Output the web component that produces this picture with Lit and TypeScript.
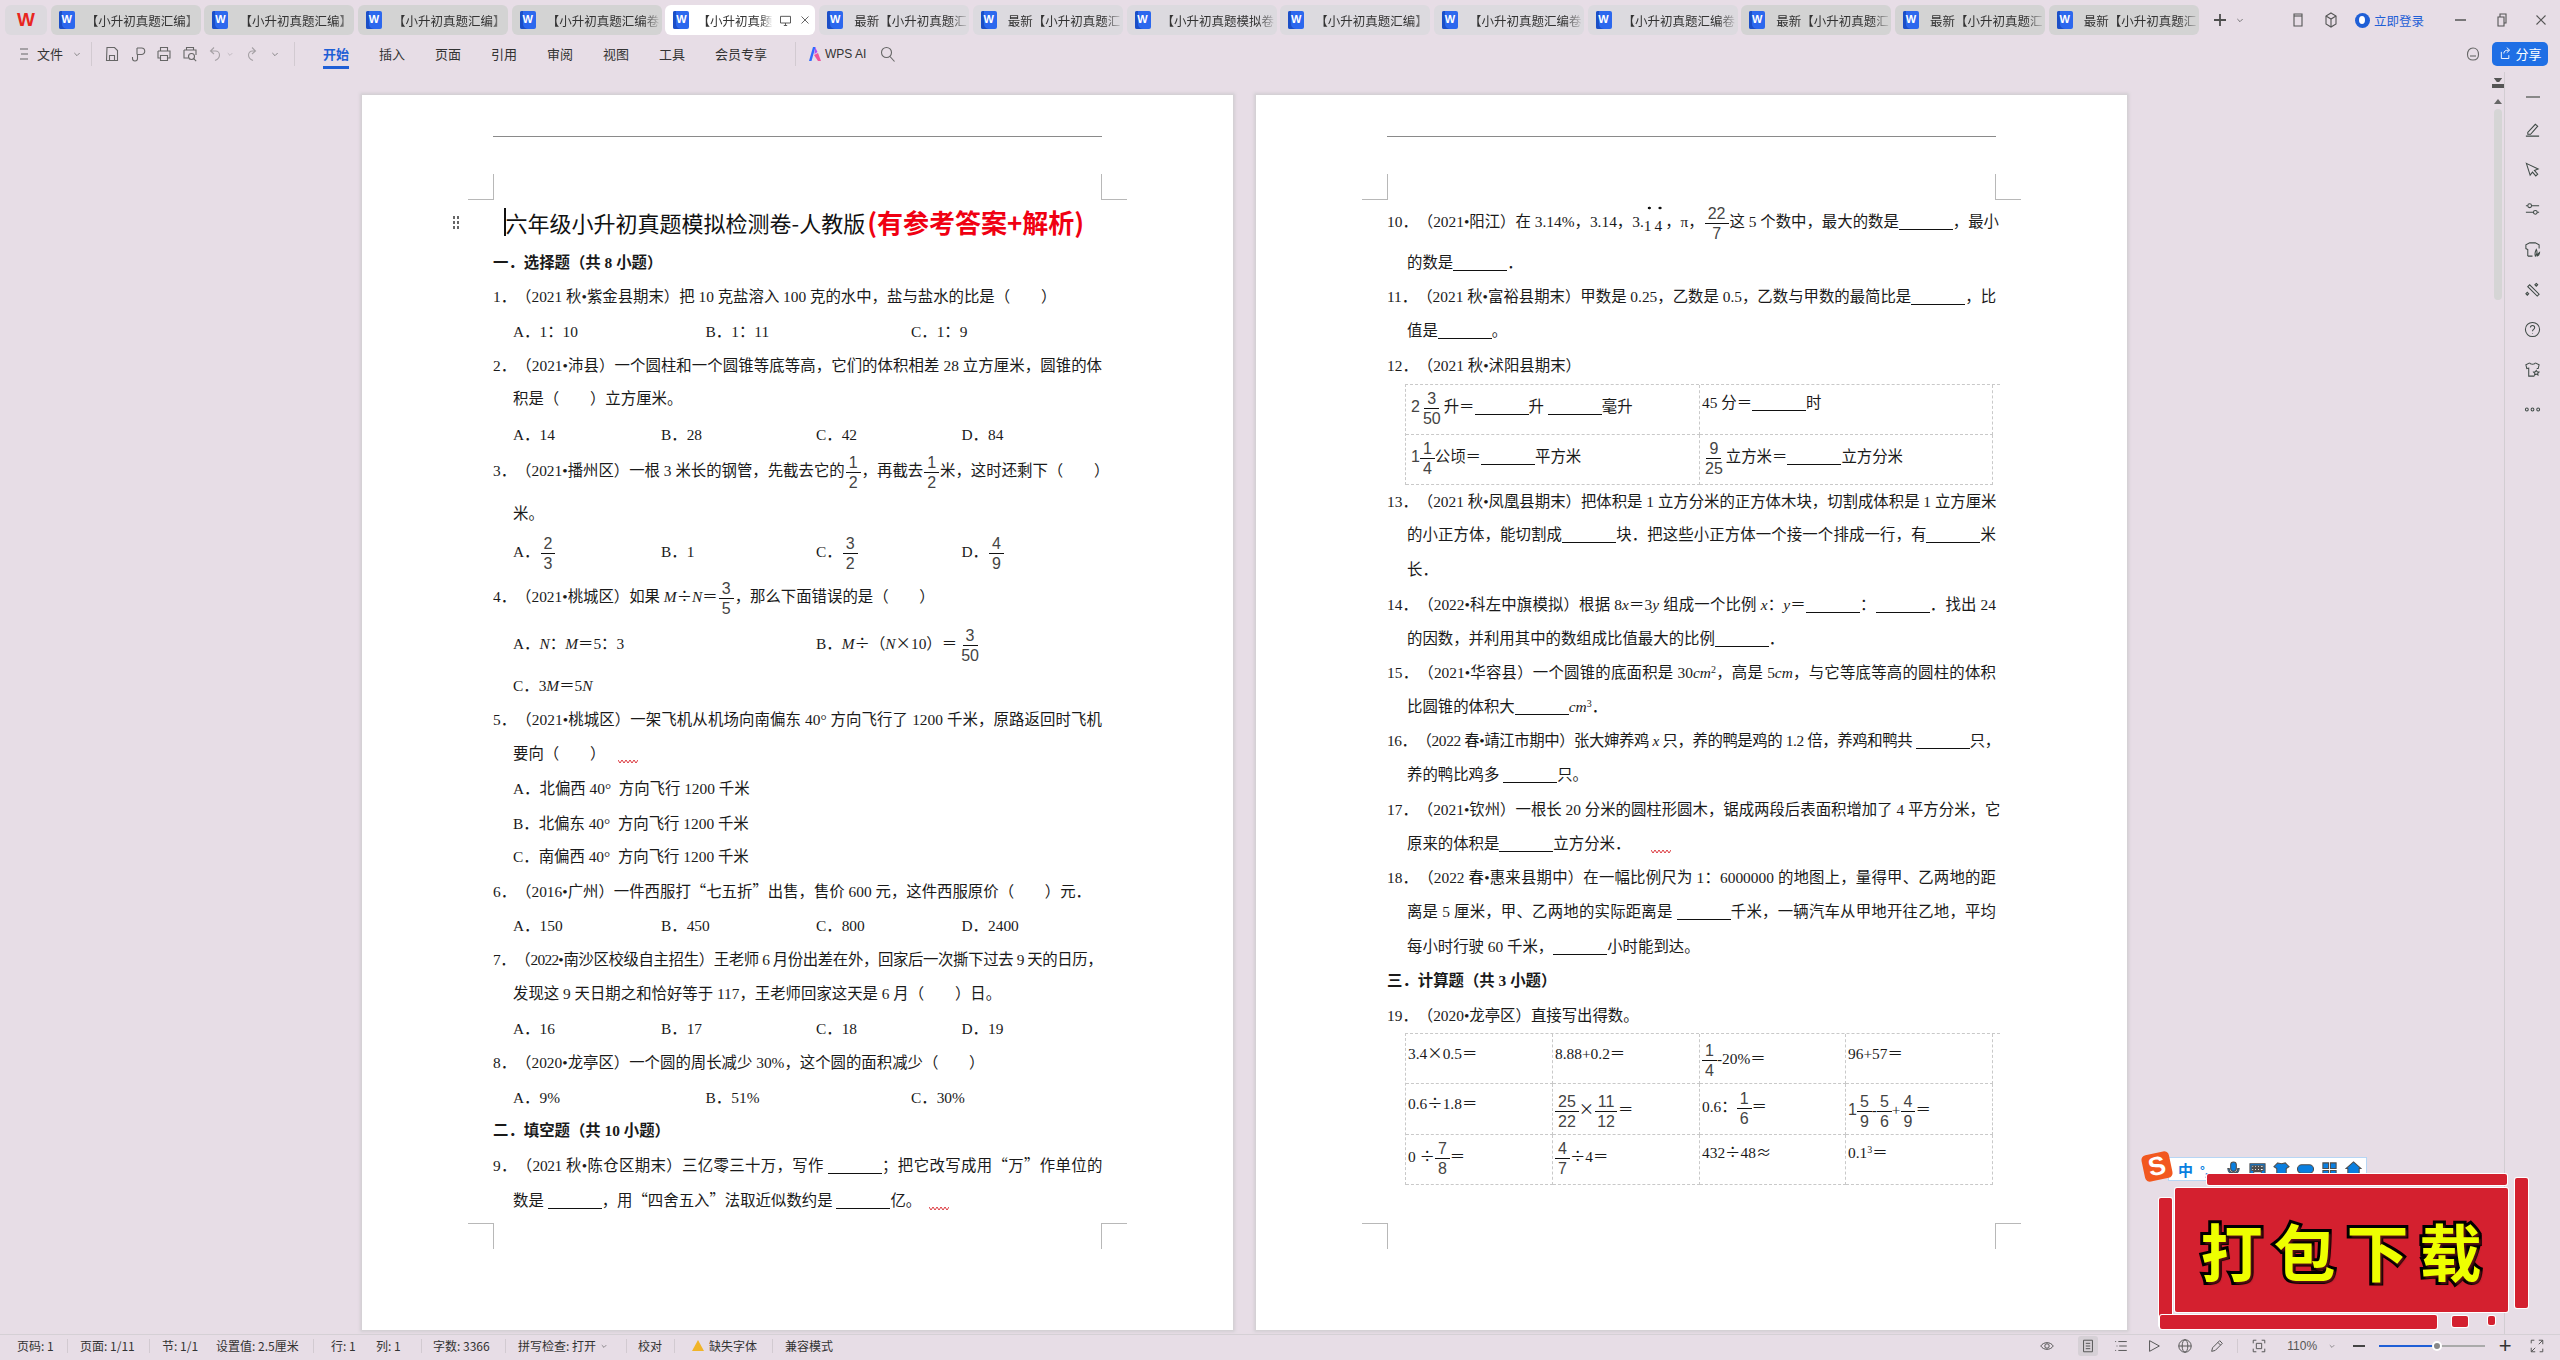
import { LitElement, html, css, svg } from 'lit';
import { customElement } from 'lit/decorators.js';

// --- small inline helpers for the document body ---
const f = (n: string, d: string, cls = '') => html`<span class="f ${cls}"><span>${n}</span><span>${d}</span></span>`;
const mixed = (w: string, n: string, d: string) => html`<span class="mixed">${w}</span>${f(n, d, 'tight')}`;
const b = () => html`<span class="blank"></span>`;
const wave = (gap: number) => html`<svg class="wave" style="margin-left:${gap}px" width="20" height="5" viewBox="0 0 20 5"><path d="M0 1l2 3 2-3 2 3 2-3 2 3 2-3 2 3 2-3 2 3 2-3" fill="none" stroke="#d8262c" stroke-width=".9"/></svg>`;

// glyphs that the paper shows at full CJK width
const cj = (t: string) => html`<span class="cj">${t}</span>`;
const LQ = cj('“');
const RQ = cj('”');
const DIV = cj('÷');
const MUL = cj('×');

type Item = { top: number; h: number; body: unknown; cls?: string };
const l = (c: number, body: unknown, cls = ''): Item => ({ top: c - 10, h: 20, body, cls });

// each line sits at its own place in the document, given by its centre
const opts = (c: number, cols: string, items: unknown[]): Item =>
  l(c, items.map((o) => html`<span>${o}</span>`), `opts ${cols}`);

const cellTable = (cols: string, rows: { h: number; cells: [number, unknown][] }[]) => html`
  <div class="tbl ${cols}">
    ${rows.map((r) => r.cells.map(([pad, c]) => html`
      <div class="cell" style="height:${r.h}px;padding-top:${pad}px">${c}</div>`))}
  </div>`;

const page1: Item[] = [
  l(221.5, html`<span class="cursor"></span>六年级小升初真题模拟检测卷-人教版<span class="red">(有参考答案+解析)</span>`, 'title'),
  l(262.6, '一．选择题（共 8 小题）', 'head'),
  l(296.7, '1．（2021 秋•紫金县期末）把 10 克盐溶入 100 克的水中，盐与盐水的比是（　　）'),
  opts(332, 'o3', ['A．1：10', 'B．1：11', 'C．1：9']),
  l(365.6, '2．（2021•沛县）一个圆柱和一个圆锥等底等高，它们的体积相差 28 立方厘米，圆锥的体', 'j'),
  l(399, '积是（　　）立方厘米。', 'in'),
  opts(435, 'o4', ['A．14', 'B．28', 'C．42', 'D．84']),
  l(471, html`3．（2021•播州区）一根 3 米长的钢管，先截去它的${f('1', '2')}，再截去${f('1', '2')}米，这时还剩下（　　）`, 'j'),
  l(514, '米。', 'in'),
  opts(552, 'o4', [html`A．${f('2', '3')}`, 'B．1', html`C．${f('3', '2')}`, html`D．${f('4', '9')}`]),
  l(597.5, html`4．（2021•桃城区）如果 <i>M</i>${DIV}<i>N</i>＝${f('3', '5')}，那么下面错误的是（　　）`),
  opts(644, 'o2', [html`A．<i>N</i>：<i>M</i>＝5：3`, html`B．<i>M</i>${DIV}（<i>N</i>${MUL}10）＝${f('3', '50')}`]),
  l(686, html`C．3<i>M</i>＝5<i>N</i>`, 'in'),
  l(720, '5．（2021•桃城区）一架飞机从机场向南偏东 40° 方向飞行了 1200 千米，原路返回时飞机', 'j'),
  l(754, html`要向（　　）${wave(13)}`, 'in'),
  l(789, 'A．北偏西 40°\u00a0 方向飞行 1200 千米', 'in'),
  l(824, 'B．北偏东 40°\u00a0 方向飞行 1200 千米', 'in'),
  l(857.5, 'C．南偏西 40°\u00a0 方向飞行 1200 千米', 'in'),
  l(892, html`6．（2016•广州）一件西服打${LQ}七五折${RQ}出售，售价 600 元，这件西服原价（　　）元．`),
  opts(926, 'o4', ['A．150', 'B．450', 'C．800', 'D．2400']),
  l(960.5, '7．（2022•南沙区校级自主招生）王老师 6 月份出差在外，回家后一次撕下过去 9 天的日历，', 'j squeeze'),
  l(994, '发现这 9 天日期之和恰好等于 117，王老师回家这天是 6 月（　　）日。', 'in'),
  opts(1029, 'o4', ['A．16', 'B．17', 'C．18', 'D．19']),
  l(1063.5, '8．（2020•龙亭区）一个圆的周长减少 30%，这个圆的面积减少（　　）'),
  opts(1098, 'o3', ['A．9%', 'B．51%', 'C．30%']),
  l(1131, '二．填空题（共 10 小题）', 'head'),
  l(1166, html`9．（2021 秋•陈仓区期末）三亿零三十万，写作 ${b()}；把它改写成用${LQ}万${RQ}作单位的`, 'j squeeze2'),
  l(1200.6, html`数是 ${b()}，用${LQ}四舍五入${RQ}法取近似数约是 ${b()}亿。${wave(8)}`, 'in'),
];

const table12 = cellTable('t2', [
  { h: 50, cells: [
    [12, html`<span class="ml3">${mixed('2', '3', '50')}升＝${b()}升 ${b()}毫升</span>`],
    [8, html`45 分＝${b()}时`],
  ] },
  { h: 50, cells: [
    [12, html`<span class="ml3">${mixed('1', '1', '4')}公顷＝${b()}平方米</span>`],
    [12, html`${f('9', '25', 'tight')}立方米＝${b()}立方分米`],
  ] },
]);

const table19 = cellTable('t4', [
  { h: 50, cells: [
    [10, html`3.4${MUL}0.5＝`],
    [10, '8.88+0.2＝'],
    [15, html`${f('1', '4', 'tight')}-20%＝`],
    [10, '96+57＝'],
  ] },
  { h: 51, cells: [
    [10, html`0.6${DIV}1.8＝`],
    [16, html`${f('25', '22', 'tight')}${MUL}${f('11', '12', 'tight')}＝`],
    [13, html`0.6：${f('1', '6', 'tight')}＝`],
    [16, html`${mixed('1', '5', '9')}-${f('5', '6', 'tight')}+${f('4', '9', 'tight')}＝`],
  ] },
  { h: 50, cells: [
    [12, html`0 ${DIV}${f('7', '8', 'tight')}＝`],
    [12, html`${f('4', '7', 'tight')}${DIV}4＝`],
    [8, html`432${DIV}48${cj('≈')}`],
    [8, html`0.1<sup>3</sup>＝`],
  ] },
]);

const page2: Item[] = [
  l(221.7, html`10．（2021•阳江）在 3.14%，3.14，3.<span class="dots">14</span>，π，${f('22', '7')}这 5 个数中，最大的数是${b()}，最小`, 'j'),
  l(262.6, html`的数是${b()}．`, 'in'),
  l(296.7, html`11．（2021 秋•富裕县期末）甲数是 0.25，乙数是 0.5，乙数与甲数的最简比是${b()}，比`, 'j'),
  l(331.5, html`值是${b()}。`, 'in'),
  l(365.6, '12．（2021 秋•沭阳县期末）'),
  { top: 383.6, h: 100, body: table12, cls: 'block' },
  l(501, '13．（2021 秋•凤凰县期末）把体积是 1 立方分米的正方体木块，切割成体积是 1 立方厘米', 'j'),
  l(534.4, html`的小正方体，能切割成${b()}块．把这些小正方体一个接一个排成一行，有${b()}米`, 'in j'),
  l(568.8, '长．', 'in'),
  l(604, html`14．（2022•科左中旗模拟）根据 8<i>x</i>＝3<i>y</i> 组成一个比例 <i>x</i>：<i>y</i>＝${b()}：${b()}．找出 24`, 'j'),
  l(637.7, html`的因数，并利用其中的数组成比值最大的比例${b()}．`, 'in'),
  l(672.5, html`15．（2021•华容县）一个圆锥的底面积是 30<i>cm</i><sup>2</sup>，高是 5<i>cm</i>，与它等底等高的圆柱的体积`, 'j'),
  l(706, html`比圆锥的体积大${b()}<i>cm</i><sup>3</sup>．`, 'in'),
  l(740.4, html`16．（2022 春•靖江市期中）张大婶养鸡 <i>x</i> 只，养的鸭是鸡的 1.2 倍，养鸡和鸭共 ${b()}只，`, 'j squeeze2'),
  l(774.6, html`养的鸭比鸡多 ${b()}只。`, 'in'),
  l(808.8, '17．（2021•钦州）一根长 20 分米的圆柱形圆木，锯成两段后表面积增加了 4 平方分米，它', 'j'),
  l(843, html`原来的体积是${b()}立方分米．${wave(21)}`, 'in'),
  l(877, '18．（2022 春•惠来县期中）在一幅比例尺为 1：6000000 的地图上，量得甲、乙两地的距', 'j'),
  l(911.3, html`离是 5 厘米，甲、乙两地的实际距离是 ${b()}千米，一辆汽车从甲地开往乙地，平均`, 'in j'),
  l(946.4, html`每小时行驶 60 千米，${b()}小时能到达。`, 'in'),
  l(980.6, '三．计算题（共 3 小题）', 'head'),
  l(1014.7, '19．（2020•龙亭区）直接写出得数。'),
  { top: 1032.3, h: 151, body: table19, cls: 'block' },
];

// --- chrome icons ---
const s = (body: unknown, w = 18, h = 18, vb = '0 0 18 18') =>
  html`<svg class="ic" width=${w} height=${h} viewBox=${vb}>${body}</svg>`;

const icons = {
  menu: svg`<path d="M4 4h8M5 9h7M4 14h8"/>`,
  save: svg`<path d="M4 2.500h7.500l3 3v10h-11z"/><path d="M6.500 15.500v-5h5v5"/>`,
  share: svg`<path d="M8 3h4.500a3 3 0 0 1 0 6.500H8.500v4a2.500 2.500 0 0 1-5 0V12M8 3v6.500"/>`,
  print: svg`<path d="M5.500 6V2.500h7V6M3 6h12v7h-2.500M5.500 13H3V6"/><path d="M5.500 10.500h7v5h-7z"/>`,
  preview: svg`<path d="M5.500 5V2.500h7V5M3 5h12v5M3 5v8h4"/><circle cx="10.500" cy="11.500" r="3"/><path d="M12.700 13.700l2.500 2.500"/>`,
  undo: svg`<path d="M7 2.500L3.500 6 7 9M3.500 6h5a4 4 0 0 1 4 4c0 2.500-2 4.500-4.500 5.500"/>`,
  redo: svg`<path d="M9 2.500L12.500 6 9 9M12.500 6h-3a4 4 0 0 0-4 4c0 2.500 2 4.500 4.500 5.500"/>`,
  search: svg`<circle cx="7.500" cy="7.500" r="5"/><path d="M11 11.500l4.500 5"/>`,
  chev: svg`<path d="M5 7.500l4 4 4-4"/>`,
  note: svg`<path d="M5 3h8v12H5z"/><path d="M5 5h8"/>`,
  hex: svg`<path d="M9 2l5 3v8l-5 3-5-3V5z"/><path d="M4 5l5 3 5-3M9 8v8"/>`,
  restore: svg`<path d="M6 6h6v9H6z"/><path d="M8 6V3h6v9h-2"/>`,
  close: svg`<path d="M4.500 4.500l9 9M13.500 4.500l-9 9"/>`,
  cloud: svg`<path d="M9 3c3.500 0 5.500 3 5.500 6.500S12.500 15 9 15s-5.500-2-5.500-5.500S5.500 3 9 3z"/><path d="M6 11h6"/>`,
  monitor: svg`<path d="M3 4h12v8H3zM7 15h4M9 12v3"/>`,
  pen: svg`<path d="M4 12L12 3.500l2.500 2L7 14H4zM2 16h14"/>`,
  cursor: svg`<path d="M2.500 2.500L15 8.500l-4 1.500 3.500 4-2 1.800-3.500-4L6.500 15z"/>`,
  sliders: svg`<path d="M2 5h2M8 5h8M2 12h8M14 12h2"/><circle cx="6" cy="5" r="2"/><circle cx="12" cy="12" r="2"/>`,
  skin: svg`<path d="M4 16V9L2 8V4l4-2h6l4 2v4"/><path d="M4 16h5M12 16c-1-3 0-5 1-7 1 2 1 5-1 7zm2 0c0-2 1-3 2.500-4 0 2-1 3.500-2.500 4z"/>`,
  wand: svg`<path d="M4 6l2-2 10 10-2 2z"/><path d="M13 2.500l1.500 1.500-1.500 1.500L11.500 4zM3.500 12l1.500 1.500L3.500 15 2 13.500z"/>`,
  help: svg`<circle cx="9" cy="9" r="7.500"/><path d="M6.800 7c0-3 4.500-3 4.500 0 0 2-2.300 1.800-2.300 3.800M9 13v.5"/>`,
  tee: svg`<path d="M6 2L2 4l1 4 2-.5V16h6M12 2l4 2-1 4h-1.500M6 2c.5 2 5.500 2 6 0"/><path d="M13 10l1 1.500 1.800.2-1.300 1.300.3 1.800-1.800-.9-1.800.9.300-1.800-1.300-1.300 1.800-.2z"/>`,
  dots: svg`<circle cx="3" cy="9" r="1.500"/><circle cx="9" cy="9" r="1.500"/><circle cx="15" cy="9" r="1.500"/>`,
  eye: svg`<path d="M2 9c3-5 11-5 14 0-3 5-11 5-14 0z"/><circle cx="9" cy="9" r="2.500"/>`,
  page: svg`<path d="M4 2.500h10v13H4zM6.500 6h5M6.500 9h5M6.500 12h5"/>`,
  list: svg`<path d="M2.500 4h1M6 4h9.500M4 9h1M7 9h8.500M2.500 14h1M6 14h9.500"/>`,
  play: svg`<path d="M4 3l11 6-11 6z"/>`,
  globe: svg`<circle cx="9" cy="9" r="7"/><ellipse cx="9" cy="9" rx="3.200" ry="7"/><path d="M2 9h14"/>`,
  brush: svg`<path d="M3 15l1-4L12 3l3 3-8 8zM10 5l3 3"/>`,
  frame: svg`<path d="M2.500 6V2.500H6M12 2.500h3.500V6M15.500 12v3.500H12M6 15.500H2.500V12"/><path d="M6 6h6v6H6z"/>`,
  expand: svg`<path d="M11 2.500h4.500V7M15.500 2.500L11 7M7 15.500H2.500V11M2.500 15.500L7 11M2.500 6V2.500H6M15.500 12v3.500H12"/>`,
};
const ic = (name: keyof typeof icons, size = 18) => s(icons[name], size, size);

const HUI = '【小升初真题汇编】';
const JUAN = '【小升初真题汇编卷';
const NEW = '最新【小升初真题汇';
const tabs = [
  [HUI, 1], [HUI, 1], [HUI, 1], [JUAN, 1], ['【小升初真题', 2], [NEW, 0], [NEW, 0],
  ['【小升初真题模拟卷', 0], [HUI, 0], [JUAN, 0], [JUAN, 0], [NEW, 1], [NEW, 1], [NEW, 1],
] as [string, number][];

const ribbon = ['插入', '页面', '引用', '审阅', '视图', '工具', '会员专享'];
const side = ['pen', 'cursor', 'sliders', 'skin', 'wand', 'help', 'tee', 'dots'] as const;

// label, left edge, separator position (if any) in window pixels
const statusItems: [unknown, number, number | null][] = [
  ['页码: 1', 17, 67],
  ['页面: 1/11', 80, 149],
  ['节: 1/1', 162, null],
  ['设置值: 2.5厘米', 216, 313],
  ['行: 1', 331, null],
  ['列: 1', 376, 421],
  ['字数: 3366', 433, 505],
  [html`拼写检查: 打开 ${ic('chev', 10)}`, 518, 626],
  ['校对', 638, 674],
  [html`<span class="warn"></span>缺失字体`, 692, 772],
  ['兼容模式', 785, null],
];

@customElement('app-root')
export class AppRoot extends LitElement {
  static styles = css`
    :host {
      display: block;
      width: 2560px;
      height: 1360px;
      overflow: hidden;
      background: #e7dde6;
      font-family: "Noto Sans CJK SC", "Liberation Sans", sans-serif;
      color: #333;
      position: relative;
    }
    .ic { fill: none; stroke: #4d4d4d; stroke-width: 1.1; flex: none; display: block; }

    /* title bar */
    .tabbar { display: flex; align-items: center; height: 30px; padding: 5px 0 0 5px; gap: 3.700px; }
    .tab {
      width: 150px; height: 30px; border-radius: 6px; background: #dcdadf;
      display: flex; align-items: center; padding-left: 8px; gap: 11px; box-sizing: border-box;
      font-size: 12.500px; color: #333; flex: none;
    }
    .tab.dark { background: #d3d3d3; }
    .tab.on { background: #fff; }
    .tab.home { width: 42px; background: #dcd9de; justify-content: center; padding: 0; }
    .logo { font: bold 19px "Liberation Sans", sans-serif; color: #e8261f; }
    .wdoc {
      width: 16px; height: 18px; background: #2c68ee; color: #fff; border-radius: 2px;
      font: bold 11px/16px "Liberation Sans", sans-serif; text-align: center; flex: none;
      box-shadow: inset 6px -3px 0 -3px #1b4fc6;
    }
    .tname {
      flex: 1; overflow: hidden; white-space: nowrap; min-width: 0;
      mask-image: linear-gradient(90deg, #000 84%, transparent);
    }
    .tab.on { padding-right: 5px; gap: 5px; }
    .tab.on .tname { margin-left: 3px; flex: none; width: 76px; }
    .newtab { display: flex; align-items: center; margin-left: 10px; gap: 6px; }
    .win { margin-left: auto; display: flex; align-items: center; padding-right: 10px; }
    .win .ic { stroke: #555; }
    .login { color: #1f5fd6; font-size: 12.500px; display: flex; align-items: center; gap: 4px; margin: 0 28px 0 15px; }
    .avatar { width: 15px; height: 15px; border-radius: 50%; background: #1f5fd6; position: relative; overflow: hidden; }
    .avatar::after { content: ""; display: block; width: 6px; height: 8px; margin: 3px auto 0; border-radius: 50%; background: #fff; }
    .login span { white-space: nowrap; }
    .w2 { margin-right: 22px; }

    /* ribbon */
    .ribbon { display: flex; align-items: center; height: 37px; padding-left: 16px; margin-top: 0; font-size: 13px; }
    .ribbon .ic { stroke: #666; }
    .ribbon .gap8 { margin-left: 8px; }
    .vsep { width: 1px; height: 24px; background: #d2cad1; }
    .rtab { position: relative; width: 26px; white-space: nowrap; margin-right: 30px; text-align: left; }
    .rtab.on { color: #1f5fd6; font-weight: 700; }
    .rtab.on::after { content: ""; position: absolute; left: 0; right: 0; top: 22px; height: 3px; background: #1f5fd6; }
    .share {
      margin-left: auto; display: flex; align-items: center; gap: 10px; padding-right: 12px;
    }
    .sbtn {
      background: #1f6fe5; color: #fff; border-radius: 5px; width: 56px; height: 24px;
      display: flex; align-items: center; justify-content: center; gap: 2px; font-size: 13px;
    }
    .sbtn .ic { stroke: #fff; }

    /* workspace */
    .work { display: flex; height: 1262px; }
    .doc { flex: none; width: 2492px; display: flex; gap: 23px; padding: 23px 0 0 362px; box-sizing: border-box; height: 1262px; }
    .scroll { width: 12px; flex: none; display: flex; flex-direction: column; align-items: center; padding-top: 6px; }
    .scroll i { display: block; width: 0; height: 0; border: 4px solid transparent; border-bottom: 5px solid #666; margin-top: 7px; }
    .scroll b { display: block; width: 12px; height: 10px; background: linear-gradient(#555 0 4px, transparent 4px 6px, #555 6px); clip-path: polygon(15% 0, 85% 0, 60% 40%, 100% 50%, 100% 100%, 0 100%, 0 50%, 40% 40%); }
    .thumb { width: 8px; height: 191px; background: #d5d5d5; border-radius: 4px; margin-top: 5px; }
    .sidebar {
      width: 56px; flex: none; border-left: 1px solid #d2cdd2; height: 1262px;
      display: flex; flex-direction: column; align-items: center; gap: 23px; padding-top: 16px; box-sizing: border-box;
    }
    .sidebar .dash { width: 14px; height: 2px; background: #888; margin: 8px 0 0; }
    .sidebar .ic { stroke: #3f4a46; }

    /* the paper */
    .page {
      width: 871px; height: 1235px; background: #fff; flex: none; box-sizing: border-box; padding: 0 131px;
      position: relative; box-shadow: 0 0 3px 2px #d2ced2; overflow: hidden;
      font-family: "Liberation Serif", "Noto Sans CJK SC", serif; font-size: 15.400px; color: #1a1a1a;
      text-spacing-trim: space-all;
    }
    .cj { font-family: "Noto Sans CJK SC", sans-serif; line-height: 0; }
    .rule { height: 1px; background: #8a8a8a; margin-top: 41px; }
    .mark { position: absolute; width: 25px; height: 25px; border: 0 solid #b8b8b8; }
    .mark.tl { left: 106px; top: 79px; border-width: 0 1px 1px 0; }
    .mark.tr { right: 106px; top: 79px; border-width: 0 0 1px 1px; }
    .mark.bl { left: 106px; top: 1128px; border-width: 1px 1px 0 0; }
    .mark.br { right: 106px; top: 1128px; border-width: 1px 0 0 1px; }
    .line { height: 20px; line-height: 20px; white-space: nowrap; }
    .line i { font-family: "Liberation Serif", serif; font-style: italic; }
    .j { text-align: justify; text-align-last: justify; }
    .squeeze { letter-spacing: -.7px; }
    .squeeze2 { letter-spacing: -.4px; }
    .in { padding-left: 20px; }
    .head { font-weight: 700; }
    .title { font-size: 22px; padding-left: 12px; font-family: "Noto Sans CJK SC", sans-serif; position: relative; display: flex; align-items: center; color: #111; }
    .red { color: #f00012; font-size: 26px; font-weight: 700; margin-left: 2px; }
    .cursor { width: 1.500px; height: 28px; background: #111; flex: none; margin-left: -1px; }
    .grip {
      position: absolute; left: 90px; top: 120px; width: 8px; height: 14px;
      background: radial-gradient(circle, #666 1.300px, transparent 1.500px) 0 0 / 4px 5px;
    }
    .opts { display: grid; padding-left: 20px; }
    .o3 { grid-template-columns: 192.600px 205.400px 1fr; }
    .o4 { grid-template-columns: 148px 155px 145.500px 1fr; }
    .o2 { grid-template-columns: 303px 1fr; }
    .f {
      display: inline-flex; flex-direction: column; align-items: center; vertical-align: middle;
      margin: -20px 1px; line-height: 19px; text-align-last: auto; font-family: "Liberation Sans", sans-serif; font-size: 16px; color: #444; letter-spacing: 0;
    }
    .f > span { padding: 0 3px; display: block; height: 19px; }
    .f > span:first-child { border-bottom: 1px solid #111; }
    .f.tight { margin: -20px 0; }
    .mixed { font-family: "Liberation Sans", sans-serif; font-size: 16px; color: #444; line-height: 0; }
    .ml3 { margin-left: 3px; }
    .blank { display: inline-block; width: 54px; height: 0; border-bottom: 1.500px solid #111; vertical-align: -3px; }
    .wave { display: inline-block; vertical-align: -5px; }
    .dots {
      display: inline-block; letter-spacing: 3px; padding-top: 11px; margin: -11px 0 -8px; vertical-align: -4px;
      background: radial-gradient(circle, #111 1.300px, transparent 1.600px) 0 0 / 10.700px 6px repeat-x;
    }
    sup { font-size: 10px; line-height: 0; vertical-align: 5px; }
    .tbl { display: grid; border-top: 1px dashed #c9c9c9; border-left: 1px dashed #c9c9c9; }
    .t2 { grid-template-columns: 294px 293px; margin: 0 -4px 0 18px; }
    .t4 { grid-template-columns: 147px 147px 146px 147px; margin: 0 -4px 0 18px; }
    .cell {
      border-right: 1px dashed #c9c9c9; border-bottom: 1px dashed #c9c9c9; box-sizing: border-box;
      line-height: 20px; padding-left: 2px; white-space: nowrap;
    }

    /* status bar */
    .status {
      height: 24px; border-top: 1px solid #d5d0d5; display: flex; align-items: center;
      font-size: 12px; color: #333; padding: 0 0 2px 17px; position: relative; box-sizing: border-box;
    }
    .st { white-space: nowrap; display: flex; align-items: center; gap: 3px; flex: none; box-sizing: border-box; }
    .sep { width: 1px; height: 14px; background: #d2cad1; flex: none; }
    .warn { width: 0; height: 0; border: 6px solid transparent; border-bottom: 11px solid #f0b429; border-top: 0; margin-right: 2px; }
    .sright { margin-left: auto; display: flex; align-items: center; padding-right: 15px; }
    .sright .ic { stroke: #555; }
    .pageon { background: #d6d0d6; border-radius: 3px; padding: 2px; margin: 0 15px 0 23px; }
    .zoomv { color: #555; font-size: 12px; margin: 0 10px 0 20px; font-family: "Liberation Sans", sans-serif; }
    .slider { width: 106px; height: 2px; background: linear-gradient(90deg, #1f5fd6 51%, #aaa 51%); margin: 0 13.500px 0 14px; position: relative; }
    .slider::after { content: ""; position: absolute; left: 50%; top: -4px; width: 6px; height: 6px; border-radius: 50%; background: #888; border: 2px solid #fff; }
    .bar { width: 12px; height: 2px; background: #444; margin-left: 16px; }
    .plus { font: 22px/1 "Liberation Sans", sans-serif; color: #333; margin-right: 17.500px; }
    .sp15 { width: 15px; } .sp16 { width: 16px; } .sp17 { width: 17px; }
    .svsep { width: 1px; height: 14px; background: #d2cad1; margin: 0 13px 0 12px; }

    /* floating input method bar and stamp */
    .ime {
      position: absolute; left: 2168px; top: 1157px; width: 199px; height: 24px; background: #fff;
      border: 1px solid #b7d6f5; box-sizing: border-box; display: flex; align-items: center; padding-left: 9px; gap: 7px;
      color: #0a7fe0; font-size: 15px; font-weight: 700;
    }
    .ime svg { fill: #0a7fe0; flex: none; }
    .sogou {
      position: absolute; left: 2143px; top: 1153px; width: 28px; height: 27px; background: #f2581f; color: #fff;
      border-radius: 5px; transform: rotate(-12deg); font: bold 26px/27px "Liberation Sans", sans-serif; text-align: center;
    }
    .stamp { position: absolute; left: 2159px; top: 1174px; width: 370px; height: 156px; }
    .stamp div { position: absolute; background: #d4202f; border-radius: 2px; box-shadow: 0 0 0 1px #fff; }
    .s-main {
      left: 16px; top: 14px; width: 333px; height: 124px; display: flex; align-items: center; justify-content: center;
    }
    .stamp-text {
      font: 700 62px/1 "Noto Sans CJK SC", sans-serif; letter-spacing: 11px; color: #eeff00; margin-left: 10px;
      -webkit-text-stroke: 6px #000; paint-order: stroke fill; text-shadow: 2px 2px 2px #5a1015; white-space: nowrap;
    }
  `;

  private flow(items: Item[]) {
    let bottom = 137; // rule's lower edge
    return items.map((it) => {
      const gap = it.top - bottom;
      bottom = it.top + it.h;
      return html`<div class="${it.cls === 'block' ? '' : 'line'} ${it.cls ?? ''}" style="margin-top:${gap.toFixed(1)}px">${it.body}</div>`;
    });
  }

  private paper(items: Item[], grip = false) {
    return html`<div class="page">
      <div class="mark tl"></div><div class="mark tr"></div><div class="mark bl"></div><div class="mark br"></div>
      ${grip ? html`<div class="grip"></div>` : ''}
      <div class="rule"></div>
      ${this.flow(items)}
    </div>`;
  }

  private statusLeft() {
    return statusItems.map(([label, x, sep], i) => {
      const next = statusItems[i + 1]?.[1] ?? x;
      const width = (sep ?? next) - x;
      return html`<span class="st" style="width:${width}px">${label}</span>
        ${sep ? html`<span class="sep" style="margin-right:${next - sep - 1}px"></span>` : ''}`;
    });
  }

  render() {
    return html`
      <div class="tabbar">
        <div class="tab home"><span class="logo">W</span></div>
        ${tabs.map(([t, k]) => html`
          <div class="tab ${k === 1 ? 'dark' : k === 2 ? 'on' : ''}">
            <span class="wdoc">W</span><span class="tname">${t}</span>
            ${k === 2 ? html`${ic('monitor', 15)}${ic('close', 14)}` : ''}
          </div>`)}
        <div class="newtab">${s(svg`<path d="M8 2v12M2 8h12" stroke-width="1.800"/>`, 16, 16, '0 0 16 16')}${ic('chev', 12)}</div>
        <div class="win">
          ${ic('note')}<span class="sp15"></span>${ic('hex')}
          <div class="login"><span class="avatar"></span><span>立即登录</span></div>
          <span class="w2">${s(svg`<path d="M3 9h11" stroke-width="1.500"/>`)}</span>
          <span class="w2">${ic('restore')}</span>
          ${ic('close')}
        </div>
      </div>
      <div class="ribbon">
        ${ic('menu')}<span style="margin-left:3px;white-space:nowrap">文件</span><span class="gap8">${ic('chev', 12)}</span>
        <span class="vsep gap8"></span>
        <span style="margin-left:11px">${ic('save')}</span><span class="gap8">${ic('share')}</span><span class="gap8">${ic('print')}</span><span class="gap8">${ic('preview')}</span>
        <span class="gap8" style="opacity:.5">${ic('undo')}</span><span style="opacity:.5">${ic('chev', 10)}</span>
        <span class="gap8" style="opacity:.5">${ic('redo')}</span><span class="gap8">${ic('chev', 12)}</span>
        <span class="vsep" style="margin:0 28px 0 13px"></span>
        <span class="rtab on">开始</span>
        ${ribbon.map((r) => html`<span class="rtab">${r}</span>`)}
        <span class="vsep" style="margin-left:24px"></span>
        <svg width="15" height="16" viewBox="0 0 15 16" style="margin:0 3px 0 11px">
          <path d="M2 15L6 1h2.500L4.500 15z" fill="#2f6bff"/><path d="M8 1l2.500 5-3 2z" fill="#b44bf0"/><path d="M7 9l4-2 3 8h-3z" fill="#f0559a"/>
        </svg>
        <span style="white-space:nowrap;font-size:12px;font-family:'Liberation Sans',sans-serif">WPS AI</span>
        <span style="margin-left:13px">${ic('search')}</span>
        <div class="share">
          ${ic('cloud')}
          <div class="sbtn">${s(svg`<path d="M4 7v8h9v-4M7 9c0-3 2-4 6-4M10.500 2L14 5l-3.500 3"/>`, 15, 15)}分享</div>
        </div>
      </div>
      <div class="work">
        <div class="doc">
          ${this.paper(page1, true)}
          ${this.paper(page2)}
        </div>
        <div class="scroll"><b></b><i></i><div class="thumb"></div></div>
        <div class="sidebar">
          <div class="dash"></div>
          ${side.map((n) => s(icons[n], 17, 17, '0 0 18 18'))}
        </div>
      </div>
      <div class="status">
        ${this.statusLeft()}
        <div class="sright">
          ${ic('eye', 16)}
          <span class="pageon">${ic('page', 16)}</span>
          ${ic('list', 16)}<span class="sp17"></span>
          ${ic('play', 16)}<span class="sp15"></span>
          ${ic('globe', 16)}<span class="sp16"></span>
          ${ic('brush', 16)}
          <span class="svsep"></span>
          ${ic('frame', 16)}
          <span class="zoomv">110%</span>${ic('chev', 10)}
          <span class="bar"></span>
          <span class="slider"></span>
          <span class="plus">+</span>
          ${ic('expand', 16)}
        </div>
      </div>

      <div class="ime">
        <span>中</span>
        <span style="font-size:12px;width:18px;white-space:nowrap">°,</span>
        ${s(svg`<rect x="6" y="1" width="6" height="10" rx="3"/><path d="M3 8c0 8 12 8 12 0h-1.500c0 6-9 6-9 0zM8 14h2v3H8z"/>`, 17, 17)}
        ${s(svg`<path d="M1 3h16v12H1zM3 5v2h2V5zm3 0v2h2V5zm3 0v2h2V5zm3 0v2h3V5zM3 8v2h2V8zm3 0v2h2V8zm3 0v2h2V8zm3 0v2h3V8zM5 11v2h8v-2z" fill-rule="evenodd"/>`, 17, 17)}
        ${s(svg`<path d="M5 2l4 1 4-1 4 4-3 2v8H4V8L1 6z"/>`, 17, 17)}
        ${s(svg`<path d="M5 4h8a4.500 4.500 0 0 1 0 9H5A4.500 4.500 0 0 1 5 4z"/>`, 17, 17)}
        ${s(svg`<path d="M2 2h6v6H2zM10 2h6v6h-6zM2 10h6v6H2zM10 10h6v6h-6z"/>`, 17, 17)}
        ${s(svg`<path d="M9 1l8 7h-2v8H3V8H1z"/>`, 17, 17)}
      </div>
      <div class="sogou">S</div>
      <div class="stamp">
        <div style="left:48px;top:0;width:300px;height:11px"></div>
        <div class="s-main"><span class="stamp-text">打包下载</span></div>
        <div style="left:356px;top:4px;width:13px;height:130px"></div>
        <div style="left:0;top:24px;width:13px;height:129px"></div>
        <div style="left:1px;top:141px;width:277px;height:14px"></div>
        <div style="left:293px;top:142px;width:16px;height:11px"></div>
        <div style="left:329px;top:142px;width:7px;height:9px"></div>
      </div>
    `;
  }
}
